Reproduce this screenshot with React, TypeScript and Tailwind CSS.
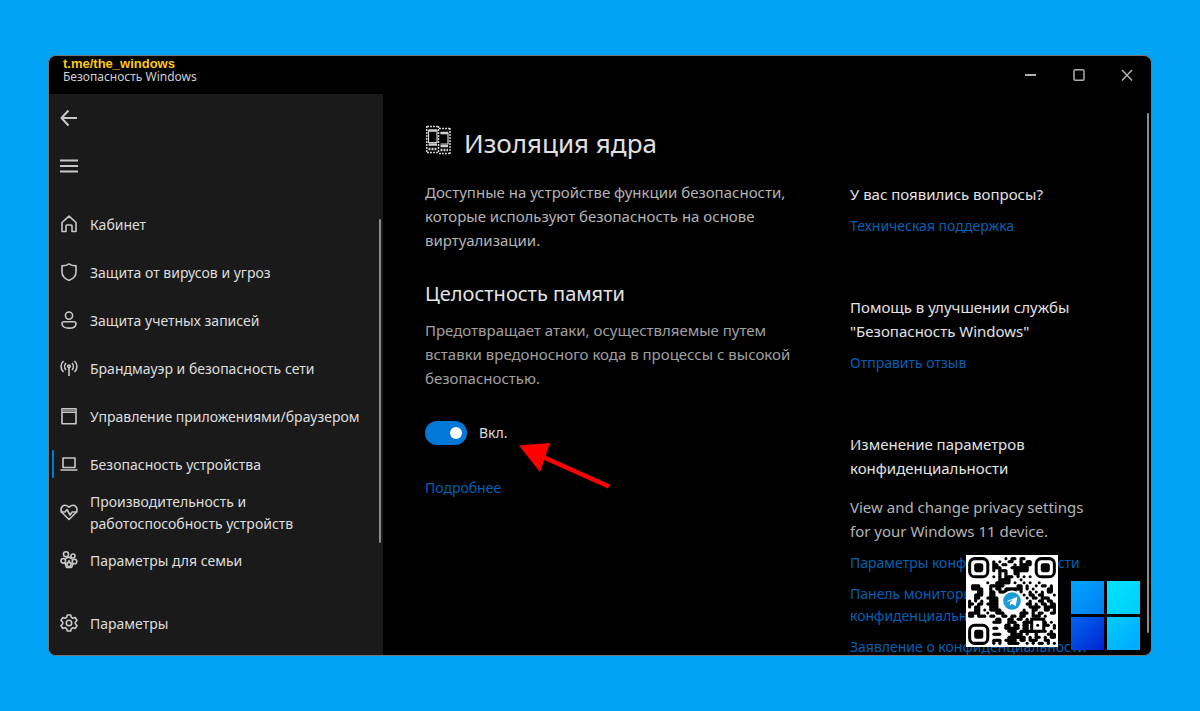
import { useState } from "react"
import type { ReactNode } from "react"
import clsx from "clsx"

const Icon = ({ children }: { children: ReactNode }) => (
  <svg
    viewBox="0 0 18 18"
    className="size-[18px] shrink-0 fill-none stroke-[#c8c8c8] stroke-[1.6]"
    strokeLinejoin="round"
    aria-hidden
  >
    {children}
  </svg>
)

const items = [
  {
    label: "Кабинет",
    icon: <path d="M2 7.500 9 1.200l7 6.300v9h-4V11q0-1-1-1H7q-1 0-1 1v5.500H2Z" />
  },
  {
    label: "Защита от вирусов и угроз",
    icon: <path d="M9 .9c2 1.500 4.200 2 7 2v6c0 4-2.500 6.700-7 8.500-4.500-1.800-7-4.500-7-8.500v-6c2.800 0 5-.5 7-2Z" />
  },
  {
    label: "Защита учетных записей",
    icon: <>
      <circle cx={9} cy={4.600} r={3.600} />
      <path d="M4 10.700h10c1.400 0 2 .7 2 1.700 0 3-2.700 4.700-7 4.700s-7-1.700-7-4.700c0-1 .6-1.700 2-1.700Z" />
    </>
  },
  {
    label: "Брандмауэр и безопасность сети",
    icon: <>
      <path d="M3.500 2C.2 5 .2 10 3.500 13M6 4C4.200 6 4.200 9 6 11M12 4c1.800 2 1.800 5 0 7M14.500 2c3.300 3 3.300 8 0 11M9 8.500V17" />
      <circle cx={9} cy={7.300} r={1.300} />
    </>
  },
  {
    label: "Управление приложениями/браузером",
    icon: <>
      <path d="M2 1.700h14v15H2ZM2 5.200h14" />
      <path d="M2 3.400h14" className="stroke-[#888]" />
    </>
  },
  {
    label: "Безопасность устройства",
    icon: <path d="M3 3h12v9.500H3ZM.5 15h17" />
  },
  {
    label: "Производительность и работоспособность устройств",
    icon: <>
      <path d="M9 16.500 2 9.500C-.8 5 3.500-.5 9 4.200 14.500-.5 18.800 5 16 9.500Z" />
      <path d="M.5 9H5l2-2.500 3 5.500 2.200-3h5.300" />
    </>
  },
  {
    label: "Параметры для семьи",
    icon: <>
      <circle cx={6} cy={3.300} r={2.500} />
      <circle cx={13} cy={5} r={2} />
      <circle cx={3.300} cy={9.800} r={2.300} />
      <circle cx={14.500} cy={10.500} r={2.300} />
      <path d="M5.500 7.500 9 6l3 2M9 9v2M5 12l1.500 4.500h5L13 13M6 13l3-2.500 3 2.500" />
      <circle cx={9} cy={13.500} r={2} />
    </>
  }
]

// 29x29 modules, the finder corners are drawn on their own
const modules = [
  "............#.##.##..........",
  "........#.#..##..#.##........",
  "........##.##..#.####........",
  "........###...######.........",
  "........#.###..#####.........",
  "..........#.#..##............",
  "........#.#.###.#.#.#........",
  "..........####...#...........",
  "......#..#####.#..#.#..#.....",
  ".###...#####....##.#..#.##.#.",
  ".####..#.##.######.#.#....##.",
  "...##..##.######.#..#.#.#.##.",
  "..###..##......#..#.##.##...#",
  "..##..####.........#.##.###..",
  "#.#.#..###..........#..##.##.",
  "##.##.####.........##.#.##.##",
  "#.##...###..........####.####",
  "..##.#.####.......#..##..##.#",
  "####..#..###.....###.#.##..##",
  "##.###.##..##.##.##..###.#...",
  ".........##..##.##.#.........",
  "........###..###..####.###.#.",
  "............##.##.##...#.##.#",
  "........##..#####.##...##...#",
  ".............###.#######.#.#.",
  "........###...####.#..#...###",
  ".............######.#.##.#.##",
  "........###.####.##.###..##..",
  "........#.#..####..#.#.##.#.#"
]

const finders = [[0, 0], [22, 0], [0, 22]]

const QrCode = () => {
  const dark = (x: number, y: number) => modules[y]?.[x] === "#"
  return <svg viewBox="-0.7 -0.7 30.4 30.4" className="size-[92px] bg-white mb-[3px]" role="img" aria-label="QR">
    {modules.map((row, y) => row.split("").map((_, x) => dark(x, y) && <g key={`${x}-${y}`}>
      <circle cx={x + 0.5} cy={y + 0.5} r={0.5} />
      {dark(x + 1, y) && <rect x={x + 0.5} y={y} width={1} height={1} />}
      {dark(x, y + 1) && <rect x={x} y={y + 0.5} width={1} height={1} />}
    </g>))}
    {finders.map(([x, y]) => <g key={`${x}-${y}`}>
      <rect x={x + 0.5} y={y + 0.5} width={6} height={6} rx={1.700} fill="none" stroke="black" />
      <rect x={x + 2} y={y + 2} width={3} height={3} rx={0.8} />
    </g>)}
    <rect x={21} y={20.500} width={4} height={4} fill="white" stroke="black" />
    <circle cx={23} cy={22.500} r={0.5} />
    <circle cx={14.500} cy={14.500} r={3.500} fill="white" />
    <circle cx={14.500} cy={14.500} r={2.900} fill="#1a9ad6" />
    <path d="m12.700 14.600 3.600-1.500-.6 3.100-1.200-.8-.7.600v-1l1.300-1.200-1.600.9Z" fill="white" />
  </svg>
}

const WindowsLogo = () => (
  <div className="grid grid-cols-2 gap-[3px] size-[69px]">
    <div className="bg-linear-to-br from-[#00a6ff] to-[#007df0]" />
    <div className="bg-linear-to-br from-[#00e4ff] to-[#00ccfa]" />
    <div className="bg-linear-to-br from-[#0063f0] to-[#0020d2]" />
    <div className="bg-linear-to-br from-[#00ccfa] to-[#00a8ff]" />
  </div>
)

const Link = ({ children, className }: { children: ReactNode, className?: string }) => (
  <a href="#" className={clsx("block w-fit text-sm text-[#0060b4]", className || "leading-6")}>{children}</a>
)

const Sidebar = () => {
  const [selected, setSelected] = useState(5)
  return <nav className="relative flex flex-col w-[334px] shrink-0 bg-[#1a1a1a] pb-2 text-sm text-[#dedede]">
    <button className="flex items-center h-12 pl-[11px]" aria-label="Назад">
      <Icon><path d="M17 9H2M8.500 1.500 1.500 9l7 7.500" className="stroke-2" /></Icon>
    </button>
    <button className="flex items-center h-12 pl-[11px] mb-2.5" aria-label="Меню">
      <Icon><path d="M0 3.500h18M0 9h18M0 14.500h18" className="stroke-2" /></Icon>
    </button>
    {items.map((item, index) => (
      <button
        key={item.label}
        className="relative flex items-center gap-3 h-12 pl-[11px] pr-16 text-left leading-[22px]"
        onClick={() => setSelected(index)}
      >
        {selected === index && <span className="absolute left-[3px] inset-y-2.5 w-0.5 rounded-full bg-[#0078d7]" />}
        <Icon>{item.icon}</Icon>
        <span className={clsx("pt-0.5", item.label.length < 40 && "whitespace-nowrap")}>{item.label}</span>
      </button>
    ))}
    <button className="flex items-center gap-3 h-12 pl-[11px] mt-auto">
      <Icon>
        <circle cx={9} cy={9} r={2.700} />
        <path d="M7.300 1h3.400l.6 2.300 1.700 1 2.300-.7L17 6.500l-1.700 1.700v1.600l1.700 1.700-1.700 2.900-2.300-.7-1.700 1-.6 2.300H7.300l-.6-2.300-1.700-1-2.300.7L1 11.500l1.700-1.700V8.200L1 6.500l1.700-2.900 2.300.7 1.700-1Z" />
      </Icon>
      <span className="pt-0.5">Параметры</span>
    </button>
    <span className="absolute right-[2px] top-[125px] h-[324px] w-0.5 rounded-full bg-[#8a8a8a]" />
  </nav>
}

const Header = () => (
  <header className="flex justify-between h-[38px] shrink-0">
    <div className="flex flex-col pl-3.5">
      <span className="leading-[15px] text-[13px] font-bold font-['Liberation_Sans',sans-serif] text-[#ffc90e]">
        t.me/the_windows
      </span>
      <span className="text-xs leading-3 text-[#d0d0d0]">Безопасность Windows</span>
    </div>
    <div className="flex">
      <button className="flex items-center justify-center w-12" aria-label="Свернуть">
        <svg viewBox="0 0 12 12" className="size-3 stroke-[#b0b0b0] fill-none stroke-2"><path d="M0 6h11" /></svg>
      </button>
      <button className="flex items-center justify-center w-12" aria-label="Развернуть">
        <svg viewBox="0 0 12 12" className="size-3 stroke-[#b0b0b0] fill-none stroke-[1.5]">
          <rect x={1} y={0.8} width={10} height={10.500} rx={1.500} />
        </svg>
      </button>
      <button className="flex items-center justify-center w-12" aria-label="Закрыть">
        <svg viewBox="0 0 12 12" className="size-3 stroke-[#b0b0b0] fill-none stroke-[1.5]">
          <path d="m1 1 10 10.500M11 1 1 11.500" />
        </svg>
      </button>
    </div>
  </header>
)

const MemoryIcon = () => (
  <svg viewBox="0 0 27 30" className="w-[27px] h-[30px] shrink-0 mb-1.5 fill-none stroke-[#d0d0d0]" aria-hidden>
    <path d="M2 1.500h12M2 27.500h12M14 3.500h11M14 28.500h11" strokeWidth={1.500} strokeDasharray="2 1" />
    <path d="M1.800 1v27M13.500 1v27M25 3v26" strokeWidth={1.500} strokeDasharray="2 1" />
    <path d="M3.500 5.500h8.500v12H3.500ZM15.500 8h7.500v11h-7.500" strokeWidth={1.200} />
    <path d="M3.500 5.500H12M3.500 19.500H12M15.500 21h7.500M15.500 8h7.500" strokeWidth={2.500} />
    <path d="M3.500 24H12M15.500 25h7.500" strokeWidth={2.500} strokeDasharray="2 1" />
  </svg>
)

const App = () => {
  const [enabled, setEnabled] = useState(true)
  return <div className="flex h-screen bg-[#00a2f3] px-12 py-[55px] font-['Noto_Sans','Open_Sans',sans-serif]">
    <div className="relative flex flex-col flex-1 min-w-0 overflow-hidden rounded-lg border border-[#777] bg-black">
      <Header />
      <div className="flex flex-1 min-h-0">
        <Sidebar />
        <main className="flex flex-1 min-w-0 pl-[42px] pt-[29px] text-[15px] leading-6">
          <section className="w-[425px] shrink-0 text-[#b4b4b4]">
            <h1 className="flex items-center gap-3 h-10 text-[26px] text-[#e0e0e0]">
              <MemoryIcon />
              Изоляция ядра
            </h1>
            <p className="mt-[17px]">
              Доступные на устройстве функции безопасности,<br />
              которые используют безопасность на основе<br />
              виртуализации.
            </p>
            <h2 className="mt-[26px] text-xl leading-8 text-[#e4e4e4]">Целостность памяти</h2>
            <p className="mt-2 text-[#a0a0a0]">
              Предотвращает атаки, осуществляемые путем<br />
              вставки вредоносного кода в процессы с высокой<br />
              безопасностью.
            </p>
            <div className="relative mt-[31px]">
              <label className="flex items-center gap-3 h-6 w-fit text-sm text-[#dedede]">
                <input
                  type="checkbox"
                  checked={enabled}
                  onChange={event => setEnabled(event.target.checked)}
                  className="relative appearance-none w-[42px] h-6 rounded-full bg-[#555] checked:bg-[#0078d7] before:absolute before:size-3 before:top-1.5 before:left-1.5 checked:before:left-[25px] before:rounded-full before:bg-white"
                />
                {enabled ? "Вкл." : "Откл."}
              </label>
              <svg viewBox="0 0 92 46" className="absolute left-[94px] top-[22px] w-[92px] h-[46px]" aria-hidden>
                <path d="M24 14 90 43.500" stroke="#f00" strokeWidth={4.500} />
                <path d="M0 2.500 31 0 21 29Z" fill="#f00" />
              </svg>
            </div>
            <div className="mt-[31px]"><Link>Подробнее</Link></div>
          </section>
          <aside className="pt-[59px] text-[#e4e4e4] whitespace-nowrap">
            <h3>У вас появились вопросы?</h3>
            <div className="mt-2"><Link>Техническая поддержка</Link></div>
            <h3 className="mt-[57px]">Помощь в улучшении службы<br />"Безопасность Windows"</h3>
            <div className="mt-2"><Link>Отправить отзыв</Link></div>
            <h3 className="mt-[57px]">Изменение параметров<br />конфиденциальности</h3>
            <p className="mt-[15px] text-[#b4b4b4]">View and change privacy settings<br />for your Windows 11 device.</p>
            <div className="flex flex-col gap-2 mt-2">
              <Link>Параметры конфиденциальности</Link>
              <Link className="leading-[22px]">Панель мониторинга<br />конфиденциальности</Link>
              <Link>Заявление о конфиденциальности</Link>
            </div>
          </aside>
        </main>
      </div>
      <span className="absolute right-[2px] top-[57px] bottom-[22px] w-0.5 rounded-full bg-[#8a8a8a]" />
      <div className="absolute right-[11px] bottom-[5px] flex items-end gap-[13px]">
        <QrCode />
        <WindowsLogo />
      </div>
    </div>
  </div>
}

export default App
